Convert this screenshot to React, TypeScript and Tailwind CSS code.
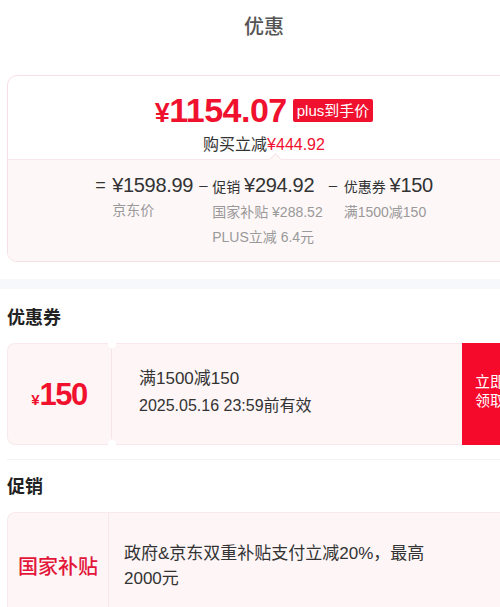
import React from "react";

const FONT = { fontFamily: '"Liberation Sans", "Noto Sans CJK SC", sans-serif' };

function PriceCard() {
  return (
    <div className="mx-[7px] mt-[21px] rounded-[10px] border border-[#f6e0e4] overflow-hidden">
      <div className="h-[83px] flex flex-col items-center pt-[17px]">
        <div className="flex items-center gap-[6px]">
          <span className="text-[#f0112f] font-bold leading-none tracking-[-0.5px]">
            <span className="text-[27px]">¥</span>
            <span className="text-[34px]">1154.07</span>
          </span>
          <span className="bg-[#f0112f] text-white text-[15px] leading-none px-[4px] py-[4px] rounded-[2px]">
            plus到手价
          </span>
        </div>
        <div className="mt-[10px] text-[16px] leading-none text-[#333]">
          购买立减<span className="text-[#f0112f]">¥444.92</span>
        </div>
      </div>
      <div className="relative h-[102px] bg-[#fdf7f8] border-t border-[#f8e6e9]">
        <div className="absolute -top-[5px] left-[263px] w-[9px] h-[9px] rotate-45 bg-[#fdf7f8] border-l border-t border-[#f8e6e9]" />
        <div className="flex justify-center pt-[13px] gap-[6px]">
          <div className="flex items-start">
            <span className="w-[17px] text-[18px] leading-[24px] text-[#333]">=</span>
            <div className="flex flex-col">
              <span className="text-[20px] leading-[24px] text-[#333] tracking-[-0.3px]">¥1598.99</span>
              <span className="mt-[2px] text-[14px] leading-[22px] text-[#999]">京东价</span>
            </div>
          </div>
          <div className="flex items-start">
            <span className="w-[13px] text-[15px] leading-[24px] text-[#333]">–</span>
            <div className="flex flex-col">
              <span className="text-[20px] leading-[24px] text-[#333] tracking-[-0.3px]">
                <span className="text-[14px] tracking-normal">促销 </span>¥294.92
              </span>
              <span className="mt-[2px] text-[14px] leading-[22px] text-[#999]">国家补贴 ¥288.52</span>
              <span className="mt-[3px] text-[14px] leading-[22px] text-[#999]">PLUS立减 6.4元</span>
            </div>
          </div>
          <div className="flex items-start">
            <span className="w-[15px] text-[15px] leading-[24px] text-[#333]">–</span>
            <div className="flex flex-col">
              <span className="text-[20px] leading-[24px] text-[#333] tracking-[-0.3px]">
                <span className="text-[14px] tracking-normal">优惠券 </span>¥150
              </span>
              <span className="mt-[2px] text-[14px] leading-[22px] text-[#999]">满1500减150</span>
            </div>
          </div>
        </div>
      </div>
    </div>
  );
}

function CouponCard() {
  return (
    <div className="mx-[7px] h-[102px] flex">
      <div className="relative w-[103px] bg-[#fdf5f6] rounded-l-[8px] border border-r-0 border-[#f8eaec] flex items-center justify-center">
        <span className="text-[#f0112f] font-bold leading-none">
          <span className="text-[15px]">¥</span>
          <span className="text-[31px] tracking-[-1.5px]">150</span>
        </span>
      </div>
      <div className="relative w-[4px] bg-[#fdf5f6]">
        <div className="absolute -top-[3px] -left-[2px] w-[8px] h-[8px] rounded-full bg-white" />
        <div className="absolute -bottom-[3px] -left-[2px] w-[8px] h-[8px] rounded-full bg-white" />
        <div className="absolute top-[6px] bottom-[6px] left-[1px] w-px bg-[#f6e6e9]" />
      </div>
      <div className="flex-1 bg-[#fdf5f6] border border-l-0 border-r-0 border-[#f8eaec] flex flex-col justify-center pl-[25px] pb-[4px]">
        <div className="text-[17px] leading-[24px] text-[#333]">满1500减150</div>
        <div className="mt-[4px] text-[16px] leading-[22px] text-[#333]">2025.05.16 23:59前有效</div>
      </div>
      <div className="w-[59px] bg-[#f60a2c] flex items-start pl-[13px] pt-[29px]">
        <span className="w-[32px] text-white text-[15px] leading-[19px]">立即领取</span>
      </div>
    </div>
  );
}

function PromoCard() {
  return (
    <div className="mx-[7px] h-[110px] flex rounded-t-[8px] border border-b-0 border-[#f8eaec] bg-[#fdf5f6] overflow-hidden">
      <div className="w-[101px] flex items-center justify-center border-r border-[#f8e8eb] pb-[2px]">
        <span className="text-[20px] text-[#e3163a] font-medium leading-none">国家补贴</span>
      </div>
      <div className="flex items-center pl-[15px] pb-[4px]">
        <p className="w-[335px] text-[17px] leading-[25px] text-[#333]">
          政府&amp;京东双重补贴支付立减20%，最高2000元
        </p>
      </div>
    </div>
  );
}

export default function App() {
  return (
    <div className="w-[500px] h-[607px] overflow-hidden bg-white" style={FONT}>
      <div className="w-[528px]">
        <div className="h-[54px] flex items-center justify-center">
          <span className="text-[20px] text-[#555] font-medium">优惠</span>
        </div>
        <PriceCard />
        <div className="mt-[17px] h-[10px] bg-[#f7f8fb]" />
        <div className="px-[7px] h-[54px] flex items-center pt-[4px]">
          <span className="text-[18px] font-bold text-[#222]">优惠券</span>
        </div>
        <CouponCard />
        <div className="mx-[7px] mt-[14px] h-px bg-[#f2f2f2]" />
        <div className="px-[7px] h-[52px] flex items-center pt-[2px]">
          <span className="text-[18px] font-bold text-[#222]">促销</span>
        </div>
        <PromoCard />
      </div>
    </div>
  );
}
